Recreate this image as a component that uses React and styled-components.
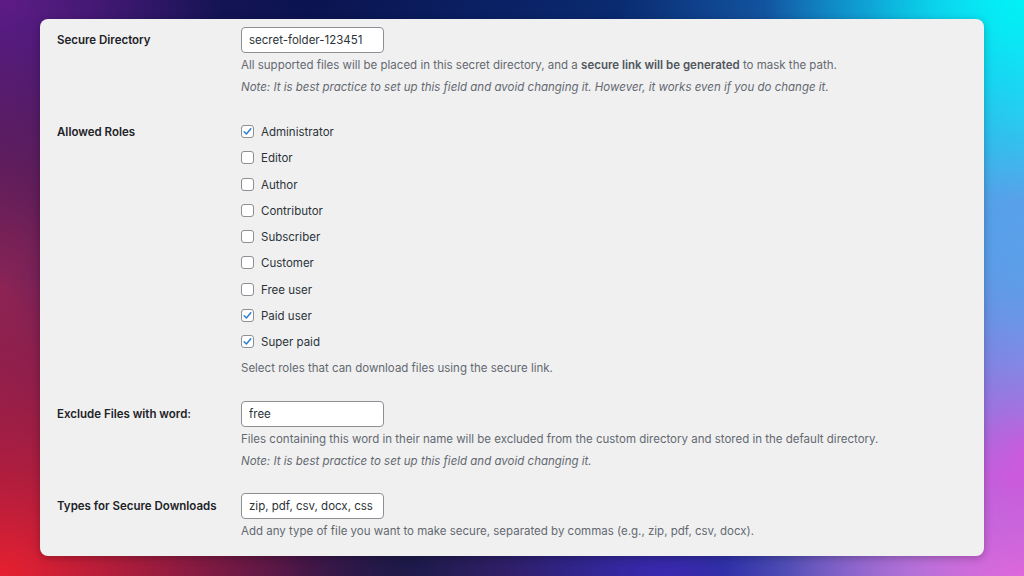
import styled, { createGlobalStyle } from 'styled-components';

const GlobalStyle = createGlobalStyle`
  html, body {
    margin: 0;
    padding: 0;
  }
  body {
    font-family: Inter, "Liberation Sans", sans-serif;
    -webkit-font-smoothing: antialiased;
  }
`;

const Page = styled.div`
  width: 1024px;
  height: 576px;
  box-sizing: border-box;
  padding: 19px 40px 20px 40px;
  overflow: hidden;
  background:
    radial-gradient(ellipse 260px 200px at 100% 0%, #00f2f6 0%, rgba(0, 242, 246, 0) 100%),
    radial-gradient(ellipse 200px 260px at 100% 38%, #5aa0ea 0%, rgba(90, 160, 234, 0) 100%),
    radial-gradient(ellipse 260px 300px at 100% 78%, #d652da 0%, rgba(214, 82, 218, 0) 100%),
    radial-gradient(ellipse 300px 160px at 100% 100%, #e883dc 0%, rgba(232, 131, 220, 0) 100%),
    radial-gradient(ellipse 260px 120px at 65% 100%, #3a28b0 0%, rgba(58, 40, 176, 0) 100%),
    radial-gradient(ellipse 220px 120px at 50% 100%, #2a1838 0%, rgba(42, 24, 56, 0) 100%),
    radial-gradient(ellipse 420px 300px at 0% 100%, #e8202f 0%, rgba(232, 32, 47, 0) 100%),
    radial-gradient(ellipse 200px 260px at 0% 50%, #8a2455 0%, rgba(138, 36, 85, 0) 100%),
    radial-gradient(ellipse 220px 200px at 0% 0%, #5e1c86 0%, rgba(94, 28, 134, 0) 100%),
    linear-gradient(90deg, #2a1560 0%, #0b1350 30%, #0a2a70 60%, #1870c0 85%, #20c8f0 100%);
`;

const Panel = styled.div`
  height: 100%;
  box-sizing: border-box;
  background: #f0f0f1;
  border-radius: 8px;
  box-shadow: 0 2px 8px rgba(0, 0, 0, 0.25);
  padding: 8px 16px 15px 17px;
`;

const Row = styled.div`
  display: grid;
  grid-template-columns: 184px 1fr;
  margin-top: ${(p) => p.$gap || 0}px;
`;

const Label = styled.div`
  font-size: 11.5px;
  font-weight: 600;
  color: #1d2327;
  line-height: ${(p) => p.$lh || 26}px;
`;

const Field = styled.div`
  display: flex;
  flex-direction: column;
  align-items: flex-start;
`;

const TextInput = styled.input`
  width: 143px;
  height: 26px;
  box-sizing: border-box;
  margin: 0;
  padding: 0 6px 0 7px;
  border: 1px solid #8c8f94;
  border-radius: 4px;
  background: #fff;
  font-family: Inter, "Liberation Sans", sans-serif;
  font-size: 11.5px;
  color: #2c3338;
  outline: none;
`;

const Description = styled.p`
  margin: 0;
  margin-top: ${(p) => p.$top || 0}px;
  font-size: 11.5px;
  line-height: 22px;
  color: #646970;
  font-style: ${(p) => (p.$note ? 'italic' : 'normal')};
  white-space: nowrap;

  & b {
    font-weight: 600;
    color: #50575e;
  }
`;

const RoleList = styled.div`
  display: flex;
  flex-direction: column;
`;

const RoleItem = styled.label`
  display: flex;
  align-items: center;
  gap: 7px;
  height: 26.25px;
  font-size: 11.5px;
  color: #2c3338;
`;

const Box = styled.span`
  width: 13px;
  height: 13px;
  margin-top: -1px;
  box-sizing: border-box;
  border: 1px solid #8c8f94;
  border-radius: 3px;
  background: #fff;
  display: flex;
  align-items: center;
  justify-content: center;
`;

const Checkbox = ({ checked }) => (
  <Box>
    {checked && (
      <svg width="11" height="11" viewBox="0 0 20 20">
        <path
          d="M4 10.5 L8 14.5 L16 5"
          fill="none"
          stroke="#2f7fd0"
          strokeWidth="2.8"
          strokeLinecap="round"
          strokeLinejoin="round"
        />
      </svg>
    )}
  </Box>
);

const roles = [
  { name: 'Administrator', checked: true },
  { name: 'Editor', checked: false },
  { name: 'Author', checked: false },
  { name: 'Contributor', checked: false },
  { name: 'Subscriber', checked: false },
  { name: 'Customer', checked: false },
  { name: 'Free user', checked: false },
  { name: 'Paid user', checked: true },
  { name: 'Super paid', checked: true },
];

const App = () => {
  return (
    <Page>
      <GlobalStyle />
      <Panel>
        <Row>
          <Label>Secure Directory</Label>
          <Field>
            <TextInput defaultValue="secret-folder-123451" />
            <Description $top={1}>
              All supported files will be placed in this secret directory, and a{' '}
              <b>secure link will be generated</b> to mask the path.
            </Description>
            <Description $note>
              Note: It is best practice to set up this field and avoid changing it. However, it
              works even if you do change it.
            </Description>
          </Field>
        </Row>

        <Row $gap={21}>
          <Label $lh={26}>Allowed Roles</Label>
          <Field>
            <RoleList>
              {roles.map((role) => (
                <RoleItem key={role.name}>
                  <Checkbox checked={role.checked} />
                  {role.name}
                </RoleItem>
              ))}
            </RoleList>
            <Description $top={2}>
              Select roles that can download files using the secure link.
            </Description>
          </Field>
        </Row>

        <Row $gap={22}>
          <Label>Exclude Files with word:</Label>
          <Field>
            <TextInput defaultValue="free" />
            <Description $top={1}>
              Files containing this word in their name will be excluded from the custom directory
              and stored in the default directory.
            </Description>
            <Description $note>
              Note: It is best practice to set up this field and avoid changing it.
            </Description>
          </Field>
        </Row>

        <Row $gap={21}>
          <Label>Types for Secure Downloads</Label>
          <Field>
            <TextInput defaultValue="zip, pdf, csv, docx, css" />
            <Description $top={1}>
              Add any type of file you want to make secure, separated by commas (e.g., zip, pdf,
              csv, docx).
            </Description>
          </Field>
        </Row>
      </Panel>
    </Page>
  );
};

export default App;
